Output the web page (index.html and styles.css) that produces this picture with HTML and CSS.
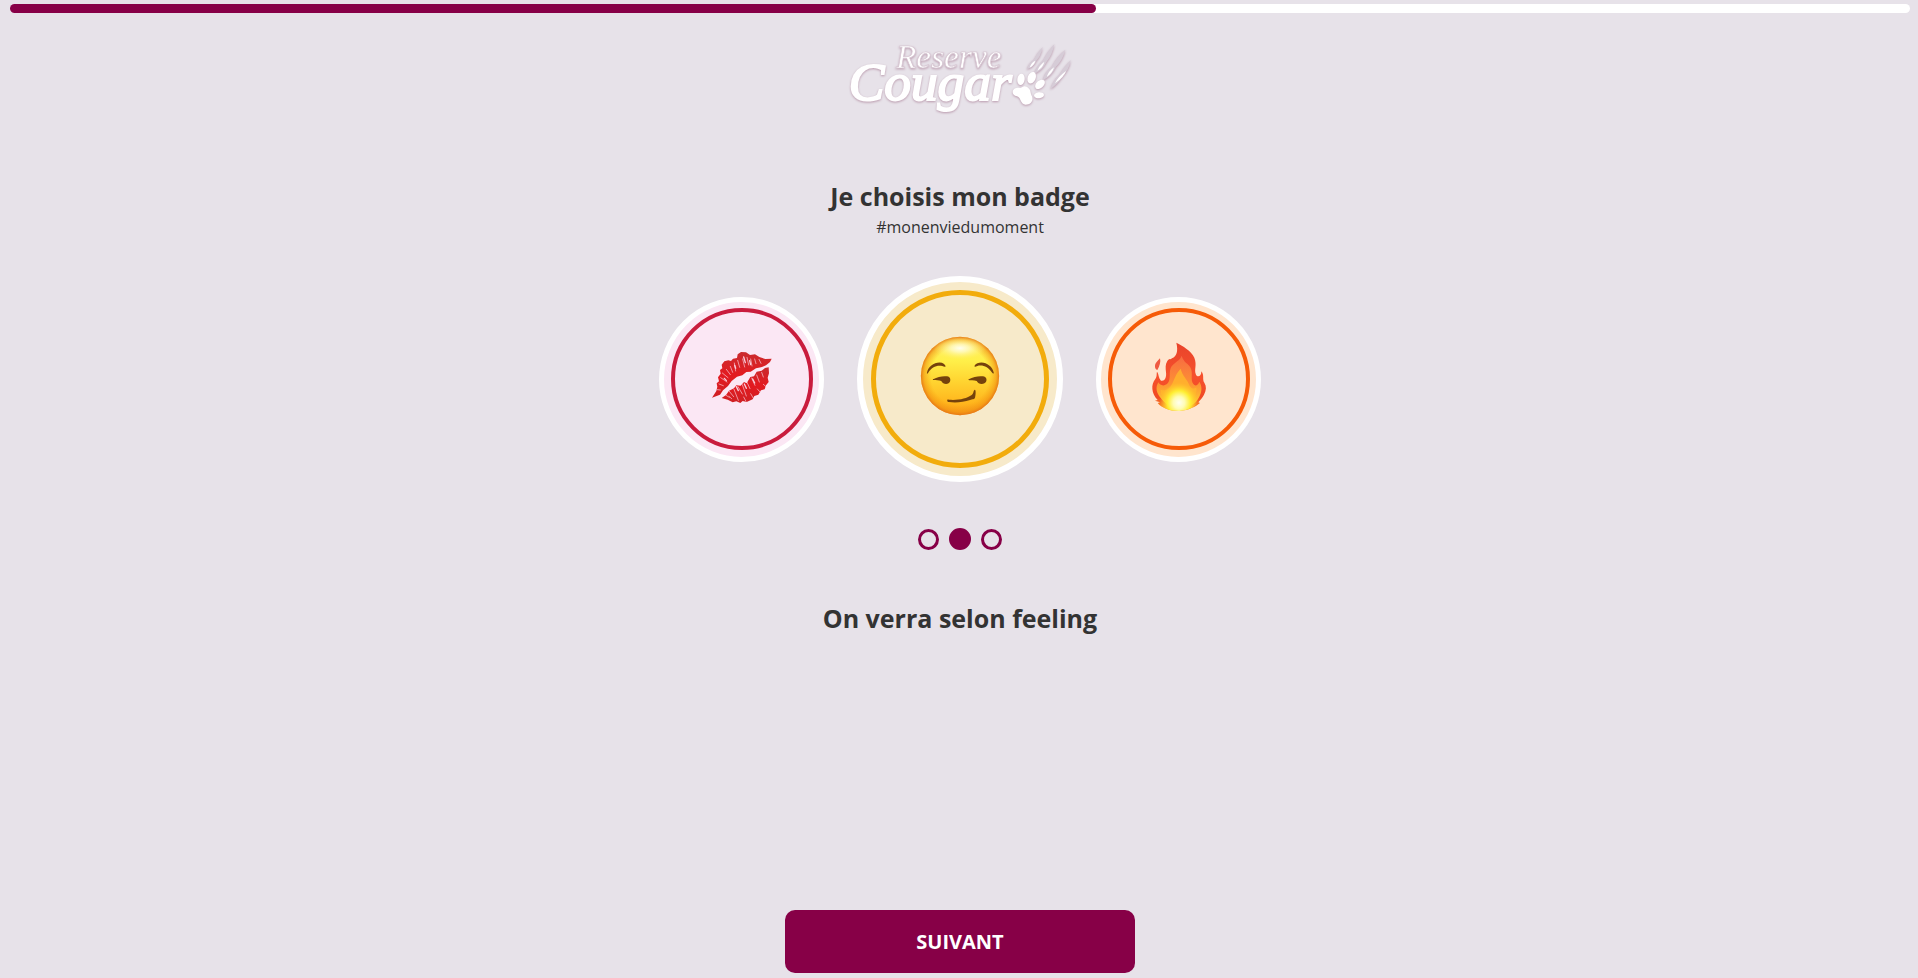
FILE: index.html
```html
<!DOCTYPE html>
<html lang="fr">
  <head>
    <meta charset="utf-8" />
    <meta name="viewport" content="width=device-width, initial-scale=1.0" />
    <title>Reserve Cougar</title>
    <link rel="stylesheet" href="styles.css">
  </head>
  <body>
    <progress class="progress" value="4" max="7" aria-label="Progression"></progress>

    <header class="header">
      <svg class="logo" viewBox="0 0 720 270" role="img" aria-label="Reserve Cougar">
        <text class="logo-small" x="168" y="102">Reserve</text>
        <text class="logo-big" x="26" y="198">Cougar</text>
        <g class="claws">
          <path d="M560 106Q566 86 581 77Q590 57 608 39Q603 65 590 79Q582 98 560 106Z" />
          <path d="M581 120Q590 94 608 80Q621 53 643 30Q638 61 620 83Q607 110 581 120Z" />
          <path d="M608 139Q614 112 635 98Q650 66 676 47Q668 79 648 98Q634 127 608 139Z" />
          <path d="M631 165Q639 138 657 123Q673 96 692 78Q687 110 668 125Q655 149 631 165Z" />
        </g>
        <g class="claw-lights">
          <path d="M569 101Q574 85 586 80Q583 94 569 101Z" />
          <path d="M592 110Q598 94 613 83Q610 100 592 110Z" />
          <path d="M620 129Q626 111 642 100Q638 117 620 129Z" />
          <path d="M645 148Q651 131 678 111Q672 130 645 148Z" />
        </g>
        <g class="paw">
          <ellipse cx="543" cy="136" rx="11" ry="17" transform="rotate(8 543 136)" />
          <ellipse cx="575" cy="131" rx="12" ry="18" transform="rotate(22 575 131)" />
          <ellipse cx="600" cy="151" rx="11" ry="17" transform="rotate(48 600 151)" />
          <ellipse cx="597" cy="184" rx="9" ry="15" transform="rotate(84 597 184)" />
          <path d="M531 187C514 184 514 165 529 162C537 160 540 164 546 160C553 154 560 157 565 162C574 169 570 177 576 187C581 199 573 212 557 212C541 212 544 191 531 187Z" />
        </g>
      </svg>
    </header>

    <main class="content">
      <h1 class="title">Je choisis mon badge</h1>
      <p class="hashtag">#monenviedumoment</p>

      <div class="badges">
        <button type="button" class="badge badge-kiss" aria-label="Bisou">
          <span class="ring">
            <svg viewBox="76 66 402 402" aria-hidden="true">
              <defs>
                <linearGradient id="lips" x1="0" y1="0" x2="0" y2="1">
                  <stop offset="0" stop-color="#c92c2e" />
                  <stop offset=".5" stop-color="#e31a20" />
                  <stop offset="1" stop-color="#cf2024" />
                </linearGradient>
              </defs>
              <path fill="url(#lips)" d="M187 323L200 303L203 290L201 280L208 274L205 262L213 251L211 240L218 235L216 224L224 214L236 211L244 213L250 206L262 204L264 193L274 186L289 187L301 195L316 193L329 201L347 207L366 206L361 216L349 226L334 232L319 235L303 245L290 246L278 256L262 260L246 273L235 288L220 301L211 314Z" />
              <path fill="url(#lips)" d="M216 324L229 315L238 302L253 295L260 286L273 287L283 276L291 280L302 261L313 259L321 245L336 242L346 234L357 232L358 250L354 263L357 276L349 286L345 298L334 301L326 314L314 318L309 328L291 336L279 333L272 339L260 334L249 337L234 329Z" />
              <g class="lip-lines">
                <path d="M213 263L232 276M218 249L235 263M230 238L242 254M242 229L249 247M254 219L258 243M264 211L270 232M279 207L285 231M292 202L297 225M303 207L307 228M315 207L319 221M328 208L334 220M208 282L221 287M203 299L212 300" />
                <path d="M239 304L252 320M253 298L266 331M265 290L278 312M278 284L290 318M292 277L301 296M306 264L316 286M321 255L329 276M336 247L341 261M229 316L239 322M282 321L289 334M303 311L310 323M323 297L331 306M341 283L349 290M238 319L246 326" />
              </g>
              <g class="lip-lines lip-lines-wide">
                <path d="M282 201L287 218M300 212L303 224M224 265L230 272M255 226L258 235M260 290L266 302M284 282L290 295M309 267L315 279" />
              </g>
            </svg>
          </span>
        </button>

        <button type="button" class="badge badge-feeling active" aria-label="On verra selon feeling">
          <span class="ring">
            <svg viewBox="80 76 502 502" aria-hidden="true">
              <defs>
                <linearGradient id="face" x1="0" y1="0" x2="0" y2="1">
                  <stop offset="0" stop-color="#ffe96a" />
                  <stop offset=".3" stop-color="#fff04a" />
                  <stop offset=".55" stop-color="#ffd632" />
                  <stop offset=".85" stop-color="#ffb51d" />
                  <stop offset="1" stop-color="#f89c1c" />
                </linearGradient>
                <radialGradient id="edge">
                  <stop offset=".74" stop-color="#f59a10" stop-opacity="0" />
                  <stop offset=".92" stop-color="#f08c10" stop-opacity=".55" />
                  <stop offset="1" stop-color="#e57518" stop-opacity=".95" />
                </radialGradient>
                <radialGradient id="shine">
                  <stop offset="0" stop-color="#fffef0" />
                  <stop offset=".35" stop-color="#fffbc8" stop-opacity=".8" />
                  <stop offset="1" stop-color="#fff36a" stop-opacity="0" />
                </radialGradient>
              </defs>
              <circle cx="331" cy="318" r="117" fill="url(#face)" />
              <circle cx="331" cy="318" r="117" fill="url(#edge)" />
              <ellipse cx="331" cy="235" rx="78" ry="34" fill="url(#shine)" />
              <g fill="#75420c">
                <path d="M232 310C235 291 252 278 270 278C280 278 287 284 288 289C286 292 283 290 278 288C260 285 246 292 236 308C234 311 232 312 232 310Z" />
                <path d="M374 288C378 281 387 278 395 278C412 279 428 290 432 308C432 312 429 311 426 307C416 292 400 284 383 288C377 291 374 291 374 288Z" />
                <path d="M251 328C264 321 280 317 292 319C304 320 305 334 297 340C289 345 279 341 275 333C268 330 259 330 253 330C250 330 249 329 251 328Z" />
                <path d="M357 328C371 321 387 317 399 319C412 320 414 334 404 340C395 345 385 341 381 333C375 330 366 330 359 331C356 330 355 329 357 328Z" />
                <path d="M293 392C292 389 294 388 298 389C326 391 351 386 366 375C373 369 370 362 375 359C379 359 378 374 376 382C374 389 368 386 361 390C341 397 317 398 298 396C295 396 293 394 293 392Z" />
              </g>
            </svg>
          </span>
        </button>

        <button type="button" class="badge badge-fire" aria-label="Feu">
          <span class="ring">
            <svg viewBox="72 66 402 402" aria-hidden="true">
              <defs>
                <linearGradient id="flame" x1="0" y1="0" x2="0" y2="1">
                  <stop offset="0" stop-color="#e9442b" />
                  <stop offset=".5" stop-color="#f6502c" />
                  <stop offset=".8" stop-color="#f04a24" />
                  <stop offset="1" stop-color="#fba525" />
                </linearGradient>
                <linearGradient id="flame-mid" x1="0" y1="0" x2="0" y2="1">
                  <stop offset="0" stop-color="#f76a42" />
                  <stop offset=".5" stop-color="#fd8f34" />
                  <stop offset="1" stop-color="#ffd52c" />
                </linearGradient>
                <radialGradient id="glow">
                  <stop offset="0" stop-color="#fffff0" />
                  <stop offset=".3" stop-color="#fffcb4" />
                  <stop offset=".6" stop-color="#ffee32" />
                  <stop offset="1" stop-color="#ffc82b" stop-opacity="0" />
                </radialGradient>
                <clipPath id="flame-base">
                  <path d="M190 150H356V314C348 322 337 330 331 337C324 350 301 361 275 363C247 364 220 353 209 339L190 314Z" />
                </clipPath>
              </defs>
              <path fill="#ef5a42" d="M216 205C219 215 215 228 208 240C199 238 199 222 206 216C209 212 213 209 216 205Z" />
              <path fill="url(#flame)" d="M265 158C284 168 310 182 319 203C328 226 317 238 324 254C329 264 341 258 340 244C350 256 342 269 349 278C356 289 355 301 348 314C344 322 337 330 331 337L336 339C324 350 301 361 275 363C247 364 220 353 209 339L216 337L201 332L209 330C190 311 188 283 202 267C208 258 205 252 207 245C213 253 211 263 219 272C229 275 236 264 234 247C233 235 231 224 238 213C245 204 246 211 252 205C266 198 271 184 265 158Z" />
              <path fill="url(#flame-mid)" d="M281 197C276 212 260 216 251 229C240 245 251 266 239 280C228 291 216 286 211 277C202 292 204 309 220 326C235 344 250 356 274 357C301 356 324 342 334 320C342 305 343 289 334 275C329 288 321 289 316 282C306 269 316 250 308 234C302 220 287 219 281 197Z" />
              <path fill="#ffb62c" opacity=".8" d="M278 236C282 255 297 268 302 281C307 294 316 300 325 292C329 314 315 345 276 354C240 350 217 326 218 299C233 305 245 296 252 282C260 267 261 255 278 236Z" />
              <ellipse cx="273" cy="338" rx="58" ry="60" fill="url(#glow)" clip-path="url(#flame-base)" />
            </svg>
          </span>
        </button>
      </div>

      <div class="dots">
        <button type="button" class="dot" aria-label="Badge 1"></button>
        <button type="button" class="dot active" aria-label="Badge 2"></button>
        <button type="button" class="dot" aria-label="Badge 3"></button>
      </div>

      <h2 class="title">On verra selon feeling</h2>
    </main>

    <footer class="footer">
      <button type="submit" class="next">SUIVANT</button>
    </footer>
  </body>
</html>
```
FILE: styles.css
```css
* {
  box-sizing: border-box;
}

body {
  display: flex;
  flex-direction: column;
  min-height: 100vh;
  margin: 0;
  padding: 4px 8px 5px 10px;
  background-color: #e7e2e9;
  color: #333;
  font-family: "Open Sans", sans-serif;
}

button {
  padding: 0;
  border: 0;
  font-family: inherit;
  cursor: pointer;
}

/* Progress bar */
.progress {
  display: block;
  width: 100%;
  height: 9px;
  border: 0;
  border-radius: 5px;
  overflow: hidden;
  background-color: #fff;
  appearance: none;
}

.progress::-webkit-progress-bar {
  background-color: #fff;
}

.progress::-webkit-progress-value {
  border-radius: 0 5px 5px 0;
  background-color: #870047;
}

.progress::-moz-progress-bar {
  background-color: #870047;
}

/* Logo */
.header {
  display: flex;
  justify-content: center;
  margin-top: 21px;
}

.logo {
  width: 240px;
  height: 90px;
  fill: #fff;
  font-family: "Liberation Serif", serif;
  font-style: italic;
  filter: drop-shadow(0 1px 1px #b999ac);
}

.logo-small {
  font-size: 100px;
  stroke: #d6c6d2;
  stroke-width: 2px;
}

.logo-big {
  font-size: 160px;
  stroke: #fff;
  stroke-width: 6px;
}

.claws {
  fill: #d6ccd7;
}

/* Steps */
.content {
  display: flex;
  flex-direction: column;
  align-items: center;
  margin-top: 55px;
  text-align: center;
}

.title {
  margin: 0;
  font-size: 25px;
  font-weight: 700;
  line-height: 34px;
}

.hashtag {
  margin: 2px 0 0;
  font-size: 16px;
  line-height: 24px;
}

.badges {
  display: flex;
  align-items: center;
  gap: 33px;
  margin-top: 37px;
}

.badge {
  display: flex;
  align-items: center;
  justify-content: center;
  width: 165px;
  height: 165px;
  border: 5px solid #fff;
  border-radius: 50%;
}

.ring {
  width: 142px;
  height: 142px;
  border: 4px solid;
  border-radius: 50%;
}

.ring svg {
  display: block;
  width: 100%;
  height: 100%;
}

.badge.active {
  width: 206px;
  height: 206px;
  border-width: 6px;
}

.badge.active .ring {
  width: 178px;
  height: 178px;
  border-width: 5px;
}

.badge-kiss {
  background-color: #fbe7f4;
  color: #c91c3d;
}

.badge-feeling {
  background-color: #f7eaca;
  color: #f2ac0c;
}

.badge-fire {
  background-color: #ffe5ce;
  color: #f65b08;
}

.lip-lines {
  fill: none;
  stroke: #f9cfdc;
  stroke-width: 2;
  stroke-linecap: round;
}

.lip-lines-wide {
  stroke-width: 4;
}

.dots {
  display: flex;
  align-items: center;
  gap: 10px;
  margin: 46px 0 51px;
}

.dot {
  width: 21px;
  height: 21px;
  border: 3px solid #870047;
  border-radius: 50%;
  background-color: transparent;
}

.dot.active {
  width: 22px;
  height: 22px;
  background-color: #870047;
}

/* Bottom button */
.footer {
  display: flex;
  justify-content: center;
  margin-top: auto;
}

.next {
  width: 350px;
  max-width: 100%;
  height: 63px;
  border-radius: 10px;
  background-color: #870047;
  color: #fff;
  font-size: 20px;
  font-weight: 700;
}
```
